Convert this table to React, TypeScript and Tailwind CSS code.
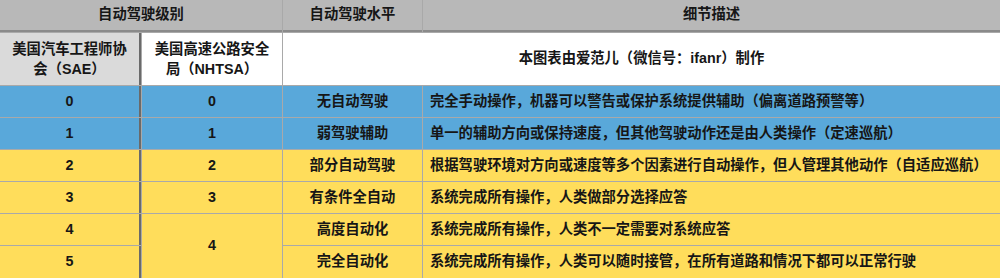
const rows = [
  { sae: "0", nhtsa: "0", level: "无自动驾驶", desc: "完全手动操作，机器可以警告或保护系统提供辅助（偏离道路预警等）", blue: true },
  { sae: "1", nhtsa: "1", level: "弱驾驶辅助", desc: "单一的辅助方向或保持速度，但其他驾驶动作还是由人类操作（定速巡航）", blue: true },
  { sae: "2", nhtsa: "2", level: "部分自动驾驶", desc: "根据驾驶环境对方向或速度等多个因素进行自动操作，但人管理其他动作（自适应巡航）", blue: false },
  { sae: "3", nhtsa: "3", level: "有条件全自动", desc: "系统完成所有操作，人类做部分选择应答", blue: false },
  { sae: "4", nhtsa: "4", level: "高度自动化", desc: "系统完成所有操作，人类不一定需要对系统应答", blue: false },
  { sae: "5", nhtsa: null, level: "完全自动化", desc: "系统完成所有操作，人类可以随时接管，在所有道路和情况下都可以正常行驶", blue: false },
];

export default function App() {
  return (
    <div
      className="w-[1000px] h-[278px] bg-[#a9a9a9] text-[14.3px] text-[#161616] font-semibold overflow-hidden"
      style={{ fontFamily: '"Liberation Sans", "Noto Sans CJK SC", sans-serif' }}
    >
      <div className="grid grid-cols-[141px_140px_139px_1fr] grid-rows-[32px_52px_31px_31px_31px_31px_31px_32px] gap-px">
        {/* top header */}
        <div className="col-span-2 bg-[#b8b8b8] border-b-2 border-[#8a8a8a] flex items-center justify-center">
          自动驾驶级别
        </div>
        <div className="bg-[#b8b8b8] border-b-2 border-[#8a8a8a] flex items-center justify-center">
          自动驾驶水平
        </div>
        <div className="bg-[#b8b8b8] border-b-2 border-[#8a8a8a] flex items-center justify-center">
          细节描述
        </div>

        {/* sub header */}
        <div className="bg-[#dadada] border-r-2 border-[#6a6a6a] flex items-center justify-center text-center leading-[20px] px-[10px]">
          美国汽车工程师协会（SAE）
        </div>
        <div className="bg-white flex items-center justify-center text-center leading-[20px] px-[10px]">
          美国高速公路安全局（NHTSA）
        </div>
        <div className="col-span-2 bg-white flex items-center justify-center">
          本图表由爱范儿（微信号：ifanr）制作
        </div>

        {rows.map((r, i) => {
          const bg = r.blue ? "bg-[#59a8da]" : "bg-[#ffdd5b]";
          return [
            <div key={`a${i}`} className={`${bg} border-r-2 border-[#6a6a6a] flex items-center justify-center`}>
              {r.sae}
            </div>,
            r.nhtsa !== null && (
              <div
                key={`b${i}`}
                className={`${bg} flex items-center justify-center ${r.sae === "4" ? "row-span-2" : ""}`}
              >
                {r.nhtsa}
              </div>
            ),
            <div key={`c${i}`} className={`${bg} flex items-center justify-center`}>
              {r.level}
            </div>,
            <div key={`d${i}`} className={`${bg} flex items-center pl-[7px]`}>
              {r.desc}
            </div>,
          ];
        })}
      </div>
    </div>
  );
}
